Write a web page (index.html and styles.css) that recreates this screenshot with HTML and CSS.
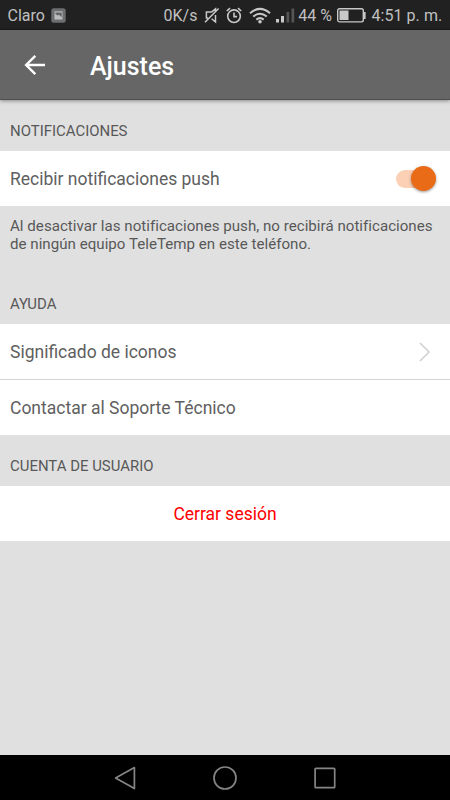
FILE: index.html
```html
<!DOCTYPE html>
<html lang="es">
<head>
<meta charset="utf-8">
<title>Ajustes</title>
<link rel="stylesheet" href="styles.css">
</head>
<body>
<div class="status">
  <span class="carrier">Claro</span>
  <svg class="shot" width="15" height="15" viewBox="0 0 15 15"><rect x=".3" y=".3" width="14.4" height="14.4" rx="2.5" fill="#6c6e70"/><path d="M3.5 3.3h8v8.2h-8z" fill="#bcbcbc"/><path d="M4.4 4.5h6.3v4.7L8 6.8 6.6 7.6 4.4 6z" fill="#626466"/></svg>
  <span class="speed">0K/s</span>
  <svg class="mute" width="16" height="18" viewBox="0 0 16 18" fill="none" stroke="#c8c8c8" stroke-width="1.5"><path d="M7.5 5.1H2.4v6H4M7.5 5.1l4-3.3v3.4M11.5 8v7L7.6 11.7M1 15.2 14.6 1.5"/></svg>
  <svg class="alarm" width="16" height="18" viewBox="0 0 16 18" fill="none" stroke="#c8c8c8" stroke-width="1.6"><circle cx="8" cy="9.2" r="6.3"/><path d="M8 5.6v4h3M.8 4 4 1.2M15.2 4 12 1.2"/></svg>
  <svg class="wifi" width="22" height="18" viewBox="0 0 22 18" fill="none" stroke="#c8c8c8" stroke-width="2"><path d="M1 6.2Q11-2.4 21 6.2M4.2 9.6q6.8-5.6 13.6 0M7.3 12.6q3.7-2.9 7.4 0"/><circle cx="11" cy="14.7" r="1.8" fill="#c8c8c8" stroke="none"/></svg>
  <svg class="signal" width="19" height="18" viewBox="0 0 19 18"><path d="M0 12h3v3.5H0zM5 9h3v6.5H5z" fill="#c8c8c8"/><path d="M10.5 5h2.7v10.5h-2.7zM15.5 1.5h2.7v14h-2.7z" fill="#555"/></svg>
  <span class="percent">44 %</span>
  <svg class="battery" width="29" height="15" viewBox="0 0 29 15"><rect x=".7" y=".7" width="25.6" height="13.2" rx="1.8" fill="none" stroke="#c8c8c8" stroke-width="1.4"/><path d="M2.5 2.5h9v9.6h-9zM27 4h1.6v7H27z" fill="#c8c8c8"/></svg>
  <span class="clock">4:51 p. m.</span>
</div>
<header class="toolbar">
  <svg class="back" width="22" height="22" viewBox="0 0 22 22" fill="none" stroke="#fff" stroke-width="2.4"><path d="M21 11H2.5M11.3 1.8 2.1 11l9.2 9.2"/></svg>
  <h1>Ajustes</h1>
</header>
<main>
  <h2 class="first">NOTIFICACIONES</h2>
  <div class="row push"><span>Recibir notificaciones push</span><span class="toggle"><i></i></span></div>
  <p>Al desactivar las notificaciones push, no recibirá notificaciones<br>de ningún equipo TeleTemp en este teléfono.</p>
  <h2 class="help">AYUDA</h2>
  <div class="row icons"><span>Significado de iconos</span><svg width="12" height="20" viewBox="0 0 12 20" fill="none" stroke="#d2d2d2" stroke-width="1.7"><path d="m1 1 9 9-9 9"/></svg></div>
  <div class="row contact"><span>Contactar al Soporte Técnico</span></div>
  <h2 class="account">CUENTA DE USUARIO</h2>
  <div class="row logout"><span>Cerrar sesión</span></div>
</main>
<nav>
  <svg width="24" height="24" viewBox="0 0 24 24"><path d="M2.6 12 21.4 1.6v21z"/></svg>
  <svg width="24" height="24" viewBox="0 0 24 24"><circle cx="12" cy="12" r="11"/></svg>
  <svg width="24" height="24" viewBox="0 0 24 24"><rect x="2.1" y="2.3" width="19.6" height="19.4" rx=".8"/></svg>
</nav>
</body>
</html>
```
FILE: styles.css
```css
* { box-sizing: border-box; }
body { margin: 0; width: 450px; height: 800px; display: flex; flex-direction: column; overflow: hidden; background: #e0e0e0; font-family: Roboto, "Liberation Sans", sans-serif; color: #606060; }
svg { display: block; flex: none; }
span { white-space: nowrap; }
.status { height: 30px; flex: none; display: flex; align-items: center; background: #212121; border-bottom: 1px solid #1a1a1a; color: #c0c0c0; font-size: 16px; padding: 2px 0 0 7.5px; line-height: 20px; }
.carrier { width: 43.5px; }
.speed { margin-left: 97.5px; width: 40px; }
.alarm { margin-left: 6.5px; }
.wifi { margin-left: 6.5px; }
.signal { margin-left: 5.5px; }
.percent { margin-left: 3.3px; width: 38.7px; }
.clock { margin-left: 5.5px; letter-spacing: .05px; }
.toolbar { height: 70px; flex: none; display: flex; align-items: center; background: #666; border-bottom: 1px solid #4f4f4f; padding-left: 24px; box-shadow: 0 1px 4px rgba(0,0,0,.4); position: relative; }
h1 { margin: 4px 0 0 44px; color: #fff; font-size: 25px; font-weight: 500; line-height: 30px; }
main { flex: 1; }
h2 { margin: 0; padding: 0 10px; font-size: 14.95px; font-weight: 400; line-height: 20px; color: #585858; }
.first { height: 51px; padding-top: 21px; }
.row { height: 55px; background: #fff; display: flex; align-items: center; justify-content: space-between; padding: 0 10px; font-size: 17.5px; }
.toggle { width: 40px; height: 26px; margin-right: 4px; display: flex; align-items: center; justify-content: flex-end; position: relative; }
.toggle::before { content: ""; position: absolute; left: 0; top: 4px; width: 34px; height: 18px; border-radius: 9px; background: #fbd0b5; }
.toggle i { position: relative; width: 25px; height: 25px; border-radius: 50%; background: #ea6b17; box-shadow: 0 1px 3px rgba(0,0,0,.4); }
p { margin: 0; height: 88px; padding: 12px 0 0 10px; font-size: 15.1px; letter-spacing: .02px; line-height: 17.5px; color: #585858; white-space: nowrap; }
.help { height: 30px; }
.icons { height: 56px; border-bottom: 1px solid #d5d5d5; }
.icons svg { margin-right: 9px; }
.account { height: 51px; padding-top: 21px; }
.logout { justify-content: center; color: #f00; }
nav { height: 45px; flex: none; background: #000; display: flex; justify-content: center; align-items: center; gap: 76px; }
nav svg { fill: none; stroke: #858585; stroke-width: 1.7; stroke-linejoin: round; }
```
